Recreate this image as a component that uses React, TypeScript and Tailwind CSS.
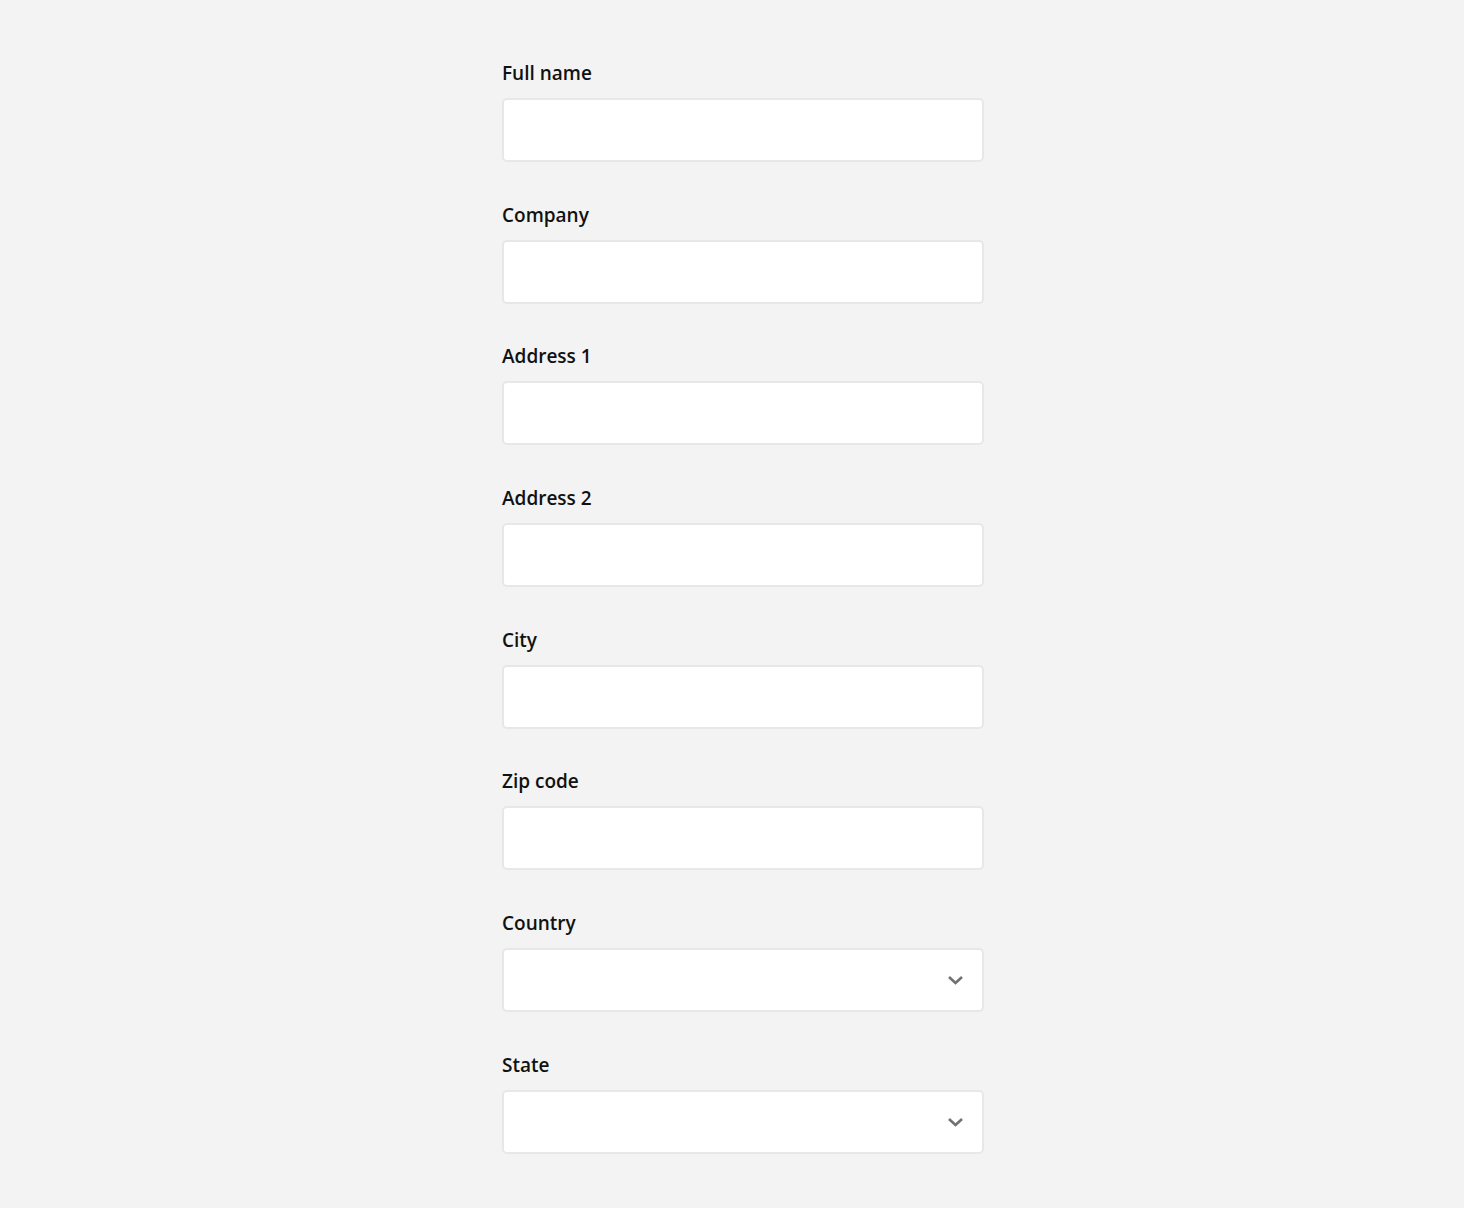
import React from 'react';

const textFields = ['Full name', 'Company', 'Address 1', 'Address 2', 'City', 'Zip code'];
const selectFields = ['Country', 'State'];

function Field({ label, select = false }: { label: string; select?: boolean }) {
  return (
    <div className="mb-[39.7px]">
      <label className="block text-[19px] leading-[26px] font-semibold text-[#111111] mb-[12px]">
        {label}
      </label>
      <div className="relative h-[64px] w-full bg-white border-2 border-[#e7e7e7] rounded-[5px]">
        {select && (
          <svg
            className="absolute right-[18px] top-1/2 -translate-y-1/2"
            width="17"
            height="11"
            viewBox="0 0 17 11"
            fill="none"
          >
            <path d="M2 2.5l6.5 6 6.5-6" stroke="#717171" strokeWidth="2.6" />
          </svg>
        )}
      </div>
    </div>
  );
}

export default function App() {
  return (
    <div
      className="min-h-[1208px] bg-[#f3f3f3] flex justify-center pl-[22px] pt-[60px]"
      style={{ fontFamily: '"Open Sans", sans-serif' }}
    >
      <form className="w-[482px]">
        {textFields.map(f => (
          <Field key={f} label={f} />
        ))}
        {selectFields.map(f => (
          <Field key={f} label={f} select />
        ))}
      </form>
    </div>
  );
}
